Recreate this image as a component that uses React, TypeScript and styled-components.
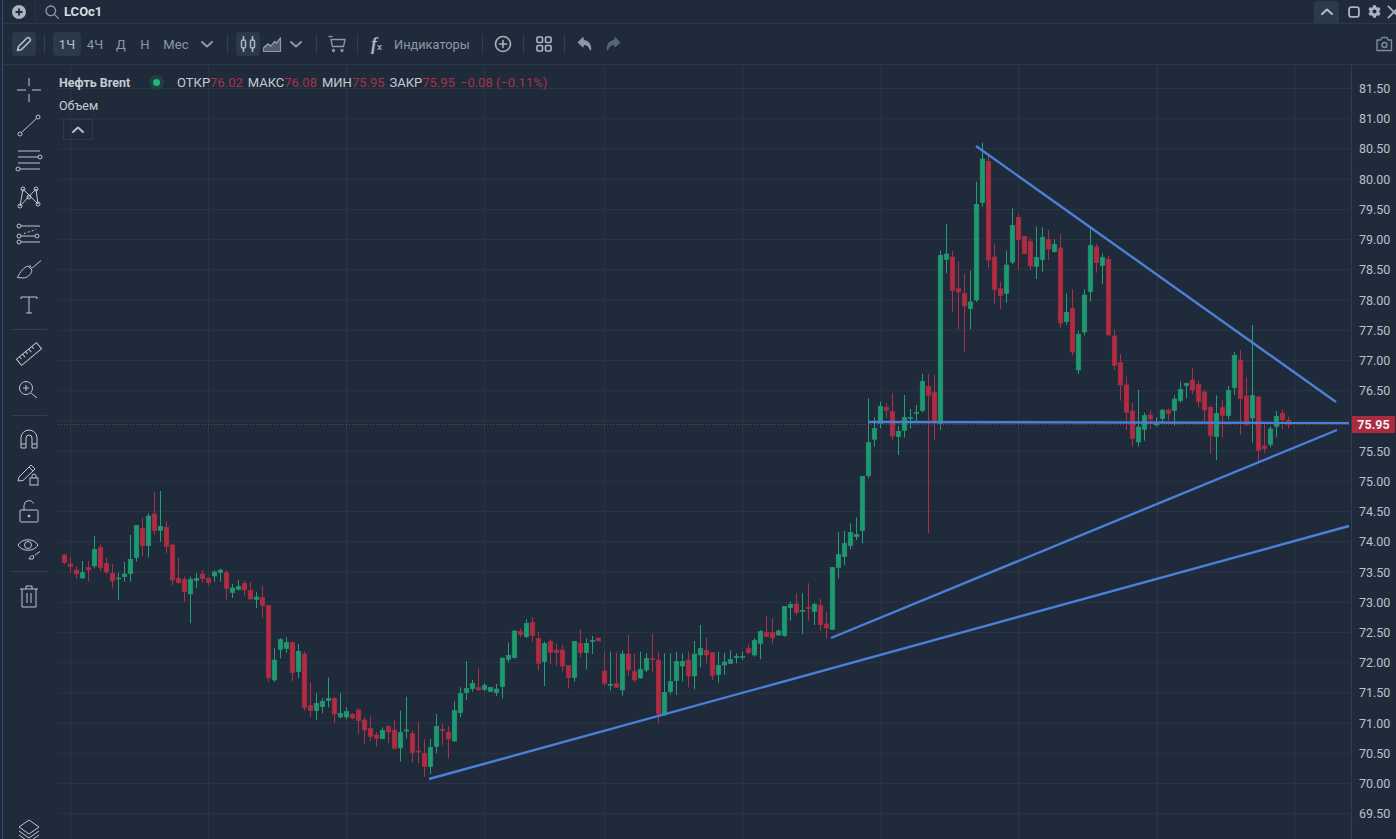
import React from 'react';
import styled, {createGlobalStyle} from 'styled-components';
import {FaCog} from 'react-icons/fa';

type Row = [number, number, number, number, number];

const GlobalStyle = createGlobalStyle`
  html, body {
    margin: 0;
    padding: 0;
    background: #1f2b3a;
    overflow: hidden;
  }
`

const Frame = styled.div`
  width: 1396px;
  height: 839px;
  padding-left: 2px;
  box-sizing: border-box;
  background: #1f2b3a;
  overflow: hidden;
  font-family: Roboto, "Liberation Sans", sans-serif;
`
const Shell = styled.div`
  height: 100%;
  display: flex;
  flex-direction: column;
  border-left: 1px solid #2f4a73;
`
const TopBar = styled.div`
  height: 23px;
  flex: none;
  display: flex;
  align-items: center;
  border-bottom: 1px solid #2c3949;
  color: #8b99a9;
`
const RoundPlus = styled.svg`
  width: 14px;
  height: 14px;
  margin-left: 9px;
  color: #a9b4c1;
`
const TopDivider = styled.div`
  width: 1px;
  height: 23px;
  margin: 0 8px 0 9px;
  background: #2a3646;
`
const Symbol = styled.span`
  margin-left: 4px;
  font-size: 13px;
  font-weight: 700;
  color: #d6dce3;
`
const TopRight = styled.div`
  margin-left: auto;
  margin-right: -8px;
  display: flex;
  align-items: center;
  height: 100%;
`
const CollapseTab = styled.div`
  width: 25px;
  height: 22px;
  margin-top: 1px;
  margin-right: 5px;
  display: flex;
  align-items: center;
  justify-content: center;
  background: #2b3a4a;
  border-radius: 4px 4px 0 0;
  color: #b4bfcb;
`
const WindowIcon = styled.div`
  width: 20px;
  display: flex;
  align-items: center;
  justify-content: center;
  color: #a9b4c1;
`
const Toolbar = styled.div`
  height: 40px;
  flex: none;
  display: flex;
  align-items: center;
  padding: 0 2px 0 9px;
  border-bottom: 1px solid #2c3949;
  color: #8b99a9;
`
const ToolDivider = styled.div`
  width: 1px;
  height: 20px;
  margin: 0 8px;
  background: #323f4e;
`
const ToolButton = styled.div<{$w?: number; $active?: boolean}>`
  width: ${p => p.$w ?? 24}px;
  height: 24px;
  display: flex;
  align-items: center;
  justify-content: center;
  border-radius: 4px;
  font-size: 13px;
  letter-spacing: 0.2px;
  background: ${p => p.$active ? '#2b3a4a' : 'transparent'};
  color: ${p => p.$active ? '#b6c0cc' : '#8b99a9'};
`
const RedoButton = styled(ToolButton)`
  margin-left: 4px;
`
const Indicators = styled.div`
  width: 108px;
  box-sizing: border-box;
  padding-left: 5px;
  display: flex;
  align-items: center;
  font-size: 12.8px;
  color: #8b99a9;
`
const FxMark = styled.span`
  width: 23px;
  font-family: "Liberation Serif", serif;
  font-style: italic;
  font-weight: 700;
  font-size: 18px;
  color: #a9b4c1;

  & small {
    font-family: "Liberation Sans", sans-serif;
    font-style: normal;
    font-size: 9px;
  }
`
const CameraSlot = styled.div`
  margin-left: auto;
  display: flex;
  color: #7d8b9c;
`
const Body = styled.div`
  flex: 1;
  min-height: 0;
  display: flex;
`
const Sidebar = styled.div`
  width: 55px;
  flex: none;
  box-sizing: border-box;
  padding: 7px 3px 0 0;
  display: flex;
  flex-direction: column;
  color: #bcc6d1;
`
const ToolGroup = styled.div<{$pad: number; $last?: boolean}>`
  margin: 0 8px;
  padding-bottom: ${p => p.$pad}px;
  margin-bottom: ${p => p.$last ? 0 : 6}px;
  border-bottom: ${p => p.$last ? 'none' : '1px solid #323f4e'};
`
const ToolSlot = styled.div`
  height: 36px;
  display: flex;
  align-items: center;
  justify-content: center;
`
const BottomSlot = styled(ToolSlot)`
  margin-top: auto;
  margin-bottom: -10px;
`
const Glyph = styled.svg`
  width: 28px;
  height: 28px;
  flex: none;
  fill: none;
  stroke: currentColor;
  stroke-width: 1;
`
const SmallGlyph = styled.svg`
  width: 20px;
  height: 20px;
  flex: none;
  fill: none;
  stroke: currentColor;
  stroke-width: 1.6;
  stroke-linecap: round;
  stroke-linejoin: round;
`
const ChevronGlyph = styled(SmallGlyph)`
  stroke-width: 2;
`
const ChartArea = styled.div`
  position: relative;
  flex: 1;
  min-width: 0;
`
const ChartSvg = styled.svg`
  display: block;
  width: 100%;
  height: 100%;
`
const GridLine = styled.line`
  stroke: #2a3644;
  stroke-width: 1;
`
const Wick = styled.line<{$up: boolean}>`
  stroke: ${p => p.$up ? '#21a078' : '#aa3147'};
  stroke-width: 1;
`
const CandleBody = styled.rect<{$up: boolean}>`
  fill: ${p => p.$up ? '#1b9c70' : '#b32b40'};
  stroke: ${p => p.$up ? '#2a8f72' : '#a12f45'};
  stroke-width: 0.6;
`
const TrendLine = styled.line`
  stroke: #4a80d8;
  stroke-width: 2.4;
`
const PriceLine = styled.line`
  stroke: #8a3c4c;
  stroke-width: 1;
  stroke-dasharray: 1 2;
`
const Legend = styled.div`
  position: absolute;
  left: 1px;
  top: 9px;
  display: flex;
  flex-direction: column;
  align-items: flex-start;
  color: #c5ccd4;
  font-size: 13px;
`
const LegendRow = styled.div`
  height: 16px;
  display: flex;
  align-items: center;
  white-space: nowrap;
`
const LegendTitle = styled.span`
  width: 84px;
  font-size: 12.5px;
  font-weight: 700;
`
const StatusDot = styled.span`
  width: 7px;
  height: 7px;
  margin-right: 17px;
  margin-left: 10px;
  border-radius: 50%;
  background: #1fb57c;
  box-shadow: 0 0 0 4px #20423f;
`
const Quote = styled.span`
  color: #a8324a;
  margin-right: 5px;
`
const VolumeLabel = styled(LegendRow)`
  margin-top: 7px;
  font-size: 12.5px;
`
const LegendToggle = styled.div`
  width: 28px;
  height: 19px;
  margin: 6px 0 0 4px;
  display: flex;
  align-items: center;
  justify-content: center;
  border: 1px solid #2b3a4a;
  color: #b4bfcb;
`
const PriceAxis = styled.div`
  position: relative;
  width: 45px;
  flex: none;
  padding-top: 9px;
  border-left: 1px solid #323f4e;
  box-sizing: border-box;
`
const PriceLabel = styled.div`
  height: 30.22px;
  line-height: 30.22px;
  padding-left: 7px;
  font-size: 12.5px;
  color: #b8c2cc;
`
const PriceBadge = styled.div`
  position: absolute;
  left: 0;
  top: 351px;
  width: 43px;
  height: 17px;
  line-height: 17px;
  text-align: center;
  background: #ac2a3f;
  color: #f1f3f5;
  font-size: 12.5px;
  font-weight: 700;
`

// candles by segment, values read off 3x crops: up, body top, body bottom, wick top, wick bottom
const segments: { oy: number; rows: Row[] }[] = [
  {
    oy: 480, rows: [
      [0, 225, 248, 222, 252], [0, 252, 260, 232, 278], [0, 270, 282, 258, 296], [1, 277, 294, 243, 296],
      [0, 262, 270, 243, 305], [1, 208, 258, 168, 265], [0, 202, 263, 193, 272], [0, 250, 276, 232, 282],
      [0, 280, 303, 252, 323], [1, 294, 296, 278, 360], [1, 282, 290, 246, 305], [1, 238, 281, 165, 305],
      [1, 136, 233, 136, 245], [0, 145, 197, 113, 228], [1, 108, 197, 100, 232], [0, 102, 152, 36, 163],
      [1, 139, 152, 33, 186], [0, 142, 200, 124, 220], [0, 195, 300, 192, 315], [0, 295, 308, 232, 310],
      [0, 298, 335, 290, 365], [1, 298, 342, 290, 430], [1, 295, 302, 278, 325], [0, 282, 296, 270, 308],
      [0, 295, 308, 292, 316], [1, 276, 288, 270, 306], [1, 270, 278, 266, 305], [0, 277, 326, 270, 360],
      [1, 324, 338, 312, 354], [1, 319, 328, 300, 332], [0, 310, 330, 302, 346], [0, 332, 357, 306, 360],
      [1, 351, 359, 336, 384], [0, 352, 377, 318, 414], [0, 376, 594, 376, 606], [1, 540, 600, 505, 606],
    ],
  },
  {
    oy: 600, rows: [
      [1, 118, 148, 115, 175], [1, 127, 146, 112, 158], [0, 128, 218, 125, 243], [1, 154, 215, 132, 235],
      [0, 162, 322, 155, 332], [0, 316, 332, 248, 352], [1, 310, 332, 280, 360], [1, 304, 320, 295, 340],
      [1, 295, 302, 233, 322], [0, 295, 342, 290, 370], [1, 340, 351, 280, 355], [1, 334, 351, 322, 358],
      [0, 343, 354, 340, 358], [0, 330, 362, 326, 402], [0, 360, 390, 352, 432], [0, 385, 410, 350, 424],
      [0, 405, 416, 396, 440], [1, 391, 416, 382, 418], [0, 380, 396, 375, 430], [0, 390, 445, 360, 448],
      [1, 397, 444, 332, 485], [1, 390, 391, 290, 415], [0, 400, 458, 392, 488], [0, 453, 455, 365, 490],
      [0, 460, 500, 418, 530], [1, 442, 500, 416, 522], [1, 379, 440, 342, 460], [0, 388, 392, 372, 435],
      [0, 396, 417, 378, 475], [1, 331, 423, 304, 425], [1, 280, 338, 262, 352], [1, 265, 278, 183, 300],
      [1, 250, 266, 240, 275], [0, 262, 270, 206, 272], [1, 256, 268, 250, 272], [1, 262, 274, 262, 276],
      [1, 267, 278, 252, 288], [1, 174, 260, 174, 295], [1, 166, 178, 127, 188], [1, 93, 173, 90, 176],
      [0, 94, 104, 85, 112], [1, 70, 110, 58, 114], [0, 67, 107, 52, 125], [0, 115, 190, 96, 212],
      [1, 130, 185, 125, 258], [0, 124, 158, 118, 192], [0, 150, 158, 130, 198],
    ],
  },
  {
    oy: 580, rows: [
      [0, 210, 258, 195, 275], [0, 256, 293, 256, 325], [1, 184, 293, 184, 305], [0, 190, 218, 148, 232],
      [1, 190, 218, 175, 268], [1, 181, 183, 168, 222], [0, 174, 183, 174, 183], [0, 273, 311, 215, 318],
      [1, 313, 314, 215, 332], [0, 310, 322, 218, 324], [1, 222, 330, 212, 347], [0, 222, 270, 165, 288],
      [0, 274, 300, 220, 306], [1, 268, 294, 215, 296], [1, 235, 270, 220, 276], [0, 236, 238, 162, 278],
      [0, 240, 402, 215, 430], [1, 337, 405, 220, 408], [1, 305, 335, 220, 343], [1, 244, 302, 215, 345],
      [1, 244, 258, 220, 305], [0, 240, 288, 215, 322], [1, 222, 288, 183, 328], [1, 205, 225, 135, 262],
      [0, 211, 225, 173, 250], [0, 217, 286, 217, 300], [1, 256, 284, 215, 308], [1, 246, 255, 218, 284],
      [1, 238, 250, 210, 252], [1, 229, 233, 220, 250], [1, 229, 231, 215, 240], [0, 205, 218, 193, 222],
      [1, 181, 225, 175, 230], [1, 154, 190, 150, 238], [0, 158, 170, 108, 172], [0, 157, 174, 115, 190],
      [1, 153, 165, 148, 168], [1, 79, 167, 79, 170], [1, 73, 83, 65, 122], [0, 72, 98, 40, 105],
      [1, 91, 93, 40, 162], [0, 82, 86, 10, 122], [1, 73, 95, 68, 135], [0, 76, 134, 56, 152],
      [0, 132, 144, 96, 175],
    ],
  },
  {
    oy: 360, rows: [
      [1, 622, 808, 622, 810], [1, 583, 622, 517, 655], [1, 550, 590, 513, 615], [1, 517, 557, 490, 568],
      [1, 523, 530, 473, 540], [1, 349, 512, 349, 550], [1, 247, 347, 115, 355], [1, 205, 238, 172, 260],
      [1, 139, 190, 125, 205], [0, 142, 152, 130, 175], [0, 154, 228, 100, 240], [1, 214, 230, 198, 285],
      [1, 172, 211, 105, 232], [1, 172, 175, 147, 205], [1, 157, 159, 135, 185], [1, 64, 152, 42, 158],
      [0, 79, 106, 42, 520], [0, 97, 185, 45, 240],
    ],
  },
  {
    oy: 130, rows: [
      [1, 376, 880, 362, 900], [1, 372, 389, 282, 430], [0, 381, 482, 362, 545], [0, 475, 486, 394, 598],
      [0, 490, 528, 432, 666], [1, 516, 536, 422, 598], [1, 223, 510, 155, 516], [1, 87, 218, 38, 230],
      [0, 94, 390, 75, 414], [0, 381, 479, 343, 522], [0, 475, 497, 455, 537], [1, 405, 491, 362, 518],
      [1, 286, 396, 235, 402], [0, 262, 329, 252, 420], [0, 319, 371, 318, 372], [0, 334, 408, 323, 420],
      [1, 382, 410, 290, 447], [1, 322, 389, 292, 425], [0, 328, 357, 300, 390], [1, 343, 365, 328, 368],
      [0, 354, 579, 312, 593], [1, 547, 575, 490, 584], [0, 535, 666, 477, 676], [1, 613, 720, 603, 732],
      [1, 495, 606, 478, 616], [1, 346, 485, 292, 514], [0, 351, 398, 342, 428], [1, 382, 407, 370, 462],
      [0, 388, 615, 378, 620],
    ],
  },
  {
    oy: 330, rows: [
      [0, 18, 107, 0, 120], [0, 98, 165, 72, 212], [0, 165, 248, 140, 300], [0, 243, 325, 218, 350],
      [1, 291, 336, 180, 350], [1, 256, 298, 248, 332], [0, 255, 267, 240, 298], [1, 282, 283, 262, 290],
      [1, 240, 266, 238, 276], [0, 240, 251, 236, 272], [1, 207, 242, 196, 288], [1, 178, 212, 155, 218],
      [1, 160, 167, 158, 205], [0, 150, 180, 114, 192], [0, 163, 215, 152, 232], [0, 186, 240, 180, 275],
      [0, 232, 317, 226, 372], [1, 250, 320, 196, 390], [0, 232, 257, 210, 322], [1, 181, 257, 168, 268],
      [1, 76, 173, 66, 195], [0, 90, 206, 60, 315], [0, 198, 283, 142, 290], [1, 196, 264, -15, 338],
      [0, 201, 361, 198, 395], [0, 348, 356, 283, 370], [1, 297, 343, 288, 352], [1, 259, 290, 243, 322],
      [0, 250, 270, 238, 298], [0, 271, 283, 260, 296],
    ],
  },
];

const candles = segments.flatMap(s => s.rows.map(r => ({
  up: r[0] === 1,
  top: s.oy + r[1] / 3,
  bottom: s.oy + r[2] / 3,
  high: s.oy + r[3] / 3,
  low: s.oy + r[4] / 3,
})));

const verticals = [70, 208, 346, 484, 604, 742, 881, 1018, 1157, 1294];
const prices = Array.from({length: 25}, (_, i) => (81.5 - i * 0.5).toFixed(2));

const Chart: React.FC = () => (
  <ChartSvg viewBox="58 65 1293 774">
    {prices.map((_, i) => (
      <GridLine key={`h-${i}`} x1={58} x2={1351} y1={88.5 + i * 30.22} y2={88.5 + i * 30.22}/>
    ))}
    {verticals.map(x => <GridLine key={`v-${x}`} x1={x + 0.5} x2={x + 0.5} y1={65} y2={839}/>)}
    <PriceLine x1={58} x2={1351} y1={424.5} y2={424.5}/>
    {candles.map((c, i) => {
      const x = 64.5 + i * 6;
      return (
        <g key={`c-${i}`}>
          <Wick $up={c.up} x1={x} x2={x} y1={c.high} y2={c.low}/>
          <CandleBody $up={c.up} x={x - 2.3} width={4.6} y={c.top} height={Math.max(c.bottom - c.top, 1)}/>
        </g>
      );
    })}
    <TrendLine x1={429} y1={779} x2={1349} y2={526}/>
    <TrendLine x1={831} y1={638} x2={1337} y2={430}/>
    <TrendLine x1={868} y1={422} x2={1349} y2={423}/>
    <TrendLine x1={976} y1={146} x2={1336} y2={402}/>
  </ChartSvg>
);

const ChevronUp: React.FC = () => (
  <ChevronGlyph viewBox="0 0 20 20"><path d="M5 12l5-4.500 5 4.500"/></ChevronGlyph>
);
const ChevronDown: React.FC = () => (
  <ChevronGlyph viewBox="0 0 20 20"><path d="M5 8l5 4.500 5-4.500"/></ChevronGlyph>
);

const App: React.FC = () => (
  <Frame>
    <GlobalStyle/>
    <Shell>
      <TopBar>
        <RoundPlus viewBox="0 0 14 14">
          <circle cx="7" cy="7" r="7" fill="currentColor"/>
          <path d="M7 3.500v7M3.500 7h7" stroke="#1f2b3a" strokeWidth="1.8"/>
        </RoundPlus>
        <TopDivider/>
        <SmallGlyph viewBox="0 0 20 20" style={{width: 16, height: 16}}>
          <circle cx="8.500" cy="8.500" r="6"/>
          <path d="M13 13l5 5"/>
        </SmallGlyph>
        <Symbol>LCOc1</Symbol>
        <TopRight>
          <CollapseTab><ChevronUp/></CollapseTab>
          <WindowIcon>
            <SmallGlyph viewBox="0 0 20 20" style={{width: 14, height: 14}}>
              <rect x="3" y="3" width="14" height="14" rx="3" strokeWidth="2.6"/>
            </SmallGlyph>
          </WindowIcon>
          <WindowIcon><FaCog size={13}/></WindowIcon>
          <WindowIcon>
            <SmallGlyph viewBox="0 0 20 20" style={{width: 16, height: 16}}>
              <path d="M3 3l14 14M17 3L3 17" strokeWidth="2.2"/>
            </SmallGlyph>
          </WindowIcon>
        </TopRight>
      </TopBar>
      <Toolbar>
        <ToolButton $active>
          <SmallGlyph viewBox="0 0 20 20">
            <path d="M3.500 16.500l1-4L13 4a1.600 1.600 0 0 1 2.200 0l.8.8a1.600 1.600 0 0 1 0 2.200l-8.500 8.500z"/>
          </SmallGlyph>
        </ToolButton>
        <ToolDivider/>
        <ToolButton $w={28} $active>1Ч</ToolButton>
        <ToolButton $w={28}>4Ч</ToolButton>
        <ToolButton>Д</ToolButton>
        <ToolButton>Н</ToolButton>
        <ToolButton $w={38}>Мес</ToolButton>
        <ToolButton><ChevronDown/></ToolButton>
        <ToolDivider/>
        <ToolButton $active>
          <SmallGlyph viewBox="0 0 20 20" style={{color: '#aab5c2'}}>
            <rect x="3.500" y="6" width="4" height="8" rx="1.500"/>
            <rect x="12.500" y="6" width="4" height="8" rx="1.500"/>
            <path d="M5.500 2.500V6M5.500 14v3.500M14.500 2.500V6M14.500 14v3.500"/>
          </SmallGlyph>
        </ToolButton>
        <ToolButton>
          <SmallGlyph viewBox="0 0 20 20" style={{color: '#8b99a9', strokeWidth: 1.2}}>
            <path d="M1.500 14l4.500-4 3 2 3.500-4.500 2 1.500 4-5"/>
            <path d="M1.500 17.500V14l4.500-4 3 2 3.500-4.500 2 1.500 4-5v13.500z" fill="currentColor" fillOpacity="0.45"/>
          </SmallGlyph>
        </ToolButton>
        <ToolButton><ChevronDown/></ToolButton>
        <ToolDivider/>
        <ToolButton>
          <SmallGlyph viewBox="0 0 20 20" style={{strokeWidth: 1.3}}>
            <path d="M2 2.500h3" strokeDasharray="1.500 1"/>
            <path d="M4 5.500h14l-1.500 7H5.500z"/>
            <circle cx="6.500" cy="16.500" r="1"/>
            <circle cx="15" cy="16.500" r="1"/>
          </SmallGlyph>
        </ToolButton>
        <ToolDivider/>
        <Indicators><FxMark>f<small>x</small></FxMark>Индикаторы</Indicators>
        <ToolDivider/>
        <ToolButton>
          <SmallGlyph viewBox="0 0 20 20" style={{color: '#a9b4c1'}}>
            <circle cx="10" cy="10" r="7.500"/>
            <path d="M10 6.500v7M6.500 10h7"/>
          </SmallGlyph>
        </ToolButton>
        <ToolDivider/>
        <ToolButton>
          <SmallGlyph viewBox="0 0 20 20" style={{color: '#a9b4c1'}}>
            <rect x="3" y="3" width="5.500" height="5.500" rx="1"/>
            <rect x="11.500" y="3" width="5.500" height="5.500" rx="1"/>
            <rect x="3" y="11.500" width="5.500" height="5.500" rx="1"/>
            <rect x="11.500" y="11.500" width="5.500" height="5.500" rx="1"/>
          </SmallGlyph>
        </ToolButton>
        <ToolDivider/>
        <ToolButton>
          <SmallGlyph viewBox="0 0 20 20" style={{color: '#8b99a9'}}>
            <path d="M8 4L3.500 8.500 8 12.500V10c3.500 0 6 1.500 7.500 5.500 0-5-2.500-8.500-7.500-9z" fill="currentColor"/>
          </SmallGlyph>
        </ToolButton>
        <RedoButton>
          <SmallGlyph viewBox="0 0 20 20" style={{color: '#566575'}}>
            <path d="M12 4l4.500 4.500-4.500 4V10c-3.500 0-6 1.500-7.500 5.500 0-5 2.500-8.500 7.500-9z" fill="currentColor"/>
          </SmallGlyph>
        </RedoButton>
        <CameraSlot>
          <SmallGlyph viewBox="0 0 20 20" style={{strokeWidth: 1.4}}>
            <path d="M3 6h3.500L8 3.500h5L14 6h3.500v10.500H3z"/>
            <circle cx="10.500" cy="11" r="2.500"/>
          </SmallGlyph>
        </CameraSlot>
      </Toolbar>
      <Body>
        <Sidebar>
          <ToolGroup $pad={5}>
            <ToolSlot><Glyph viewBox="0 0 28 28"><path d="M14 2v8M14 18v8M2 14h9M17 14h9"/></Glyph></ToolSlot>
            <ToolSlot><Glyph viewBox="0 0 28 28">
              <circle cx="5" cy="22" r="2"/><circle cx="23" cy="5" r="2"/><path d="M6.500 20.500l15-14"/>
            </Glyph></ToolSlot>
            <ToolSlot><Glyph viewBox="0 0 28 28">
              <path d="M3 3h22M3 9h20M3 15h22M5 21h20"/>
              <circle cx="25" cy="9" r="2"/><circle cx="3" cy="21" r="2"/>
            </Glyph></ToolSlot>
            <ToolSlot><Glyph viewBox="0 0 28 28">
              <path d="M5 22L8 5l15 15L21 5 5 22z"/>
              <circle cx="8" cy="5" r="2"/><circle cx="21" cy="5" r="2"/><circle cx="14" cy="13" r="2"/>
              <circle cx="5" cy="22" r="2"/><circle cx="23" cy="20" r="2"/>
            </Glyph></ToolSlot>
            <ToolSlot><Glyph viewBox="0 0 28 28">
              <circle cx="4" cy="6" r="2"/><path d="M6 6h19"/>
              <path d="M9 13.500l12-4" strokeDasharray="2 2"/>
              <circle cx="4" cy="16" r="2"/><path d="M6 16h14"/><circle cx="22" cy="16" r="2"/>
              <circle cx="4" cy="22" r="2"/><path d="M6 22h19"/>
            </Glyph></ToolSlot>
            <ToolSlot><Glyph viewBox="0 0 28 28">
              <path d="M2.500 21.500C5 16 9 11 13 10l4 4c-1 5-5 8-9 8z"/>
              <path d="M15 9c0 3 2 3.500 3.500 2L26 4.500"/>
            </Glyph></ToolSlot>
            <ToolSlot><Glyph viewBox="0 0 28 28">
              <path d="M6 7V5h16v2M14 5v16M11 21h6"/>
            </Glyph></ToolSlot>
          </ToolGroup>
          <ToolGroup $pad={7}>
            <ToolSlot><Glyph viewBox="0 0 28 28">
              <g transform="rotate(-40 14 14)">
                <rect x="1" y="10" width="26" height="8"/>
                <path d="M5 10v3M9 10v4M13 10v3M17 10v4M21 10v3"/>
              </g>
            </Glyph></ToolSlot>
            <ToolSlot><Glyph viewBox="0 0 28 28">
              <circle cx="11" cy="12" r="6.500"/>
              <path d="M16 17l6 5M11 9v6M8 12h6"/>
            </Glyph></ToolSlot>
          </ToolGroup>
          <ToolGroup $pad={5}>
            <ToolSlot><Glyph viewBox="0 0 28 28">
              <path d="M6 22V12a8 8 0 0 1 16 0v10h-5V12a3 3 0 0 0-6 0v10zM6 18h5M17 18h5"/>
            </Glyph></ToolSlot>
            <ToolSlot><Glyph viewBox="0 0 28 28">
              <path d="M3 19l1-4L16 3l4 4L8 18.500zM14 5l4 4"/>
              <rect x="15" y="16" width="8" height="7"/>
              <path d="M17 16v-2a2 2 0 0 1 4 0v2"/>
            </Glyph></ToolSlot>
            <ToolSlot><Glyph viewBox="0 0 28 28">
              <rect x="5" y="12" width="18" height="12" rx="1"/>
              <path d="M9 12V7.500a5 5 0 0 1 9.500-2"/>
              <circle cx="14" cy="18" r="1" fill="currentColor"/>
            </Glyph></ToolSlot>
            <ToolSlot><Glyph viewBox="0 0 28 28">
              <path d="M3 11C7 4 19 4 23 11 19 18 7 18 3 11z"/>
              <circle cx="13" cy="11" r="3.500"/>
              <path d="M14 25c1-3 3-4 5-3l-1 3zM20 21l5-3.500"/>
            </Glyph></ToolSlot>
          </ToolGroup>
          <ToolGroup $pad={0} $last>
            <ToolSlot><Glyph viewBox="0 0 28 28">
              <path d="M5 7h18M11 7V4h6v3M7 7v18h14V7M12 11v10M16 11v10"/>
            </Glyph></ToolSlot>
          </ToolGroup>
          <BottomSlot><Glyph viewBox="0 0 28 28">
            <path d="M14 3l10 7-10 7-10-7zM4 14l10 7 10-7M4 18l10 7 10-7"/>
          </Glyph></BottomSlot>
        </Sidebar>
        <ChartArea>
          <Chart/>
          <Legend>
            <LegendRow>
              <LegendTitle>Нефть Brent</LegendTitle>
              <StatusDot/>
              ОТКР<Quote>76.02</Quote>
              МАКС<Quote>76.08</Quote>
              МИН<Quote>75.95</Quote>
              ЗАКР<Quote>75.95</Quote>
              <Quote>−0.08 (−0.11%)</Quote>
            </LegendRow>
            <VolumeLabel>Объем</VolumeLabel>
            <LegendToggle><ChevronUp/></LegendToggle>
          </Legend>
        </ChartArea>
        <PriceAxis>
          {/* 76.00 sits under the last price badge, so its slot stays empty */}
          {prices.map(p => <PriceLabel key={p}>{p === '76.00' ? '' : p}</PriceLabel>)}
          <PriceBadge>75.95</PriceBadge>
        </PriceAxis>
      </Body>
    </Shell>
  </Frame>
);

export default App;
